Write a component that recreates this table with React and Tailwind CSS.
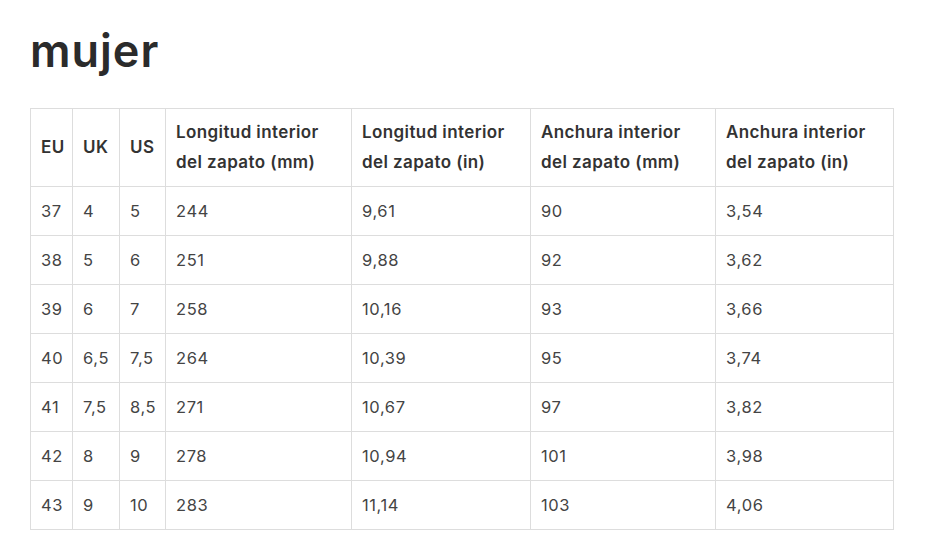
const headers = [
  ["EU"],
  ["UK"],
  ["US"],
  ["Longitud interior", "del zapato (mm)"],
  ["Longitud interior", "del zapato (in)"],
  ["Anchura interior", "del zapato (mm)"],
  ["Anchura interior", "del zapato (in)"],
];

const rows = [
  ["37", "4", "5", "244", "9,61", "90", "3,54"],
  ["38", "5", "6", "251", "9,88", "92", "3,62"],
  ["39", "6", "7", "258", "10,16", "93", "3,66"],
  ["40", "6,5", "7,5", "264", "10,39", "95", "3,74"],
  ["41", "7,5", "8,5", "271", "10,67", "97", "3,82"],
  ["42", "8", "9", "278", "10,94", "101", "3,98"],
  ["43", "9", "10", "283", "11,14", "103", "4,06"],
];

const widths = ["w-[42px]", "w-[47px]", "w-[46px]", "w-[186px]", "w-[179px]", "w-[185px]", "w-[178px]"];

export default function App() {
  return (
    <div className="min-h-[557px] bg-white px-[30px] pt-[24px] text-[#333] font-['Inter','Noto_Sans',sans-serif]">
      <h1 className="text-[45px] leading-[53px] font-semibold tracking-[1px] text-[#2b2b2b] mb-[31px]">mujer</h1>

      <table className="w-[864px] table-fixed border-collapse">
        <colgroup>
          {widths.map((w, i) => (
            <col key={i} className={w} />
          ))}
        </colgroup>
        <thead>
          <tr>
            {headers.map((h, i) => (
              <th
                key={i}
                className="border border-[#dddddd] px-[10px] py-[9px] text-left align-middle text-[17px] font-semibold leading-[29.5px] tracking-[0.4px] whitespace-nowrap text-[#333]"
              >
                {h[0]}
                {h[1] && (
                  <>
                    <br />
                    {h[1]}
                  </>
                )}
              </th>
            ))}
          </tr>
        </thead>
        <tbody>
          {rows.map((r) => (
            <tr key={r[0]}>
              {r.map((c, i) => (
                <td
                  key={i}
                  className="border border-[#dddddd] px-[10px] py-[9px] text-[16.5px] leading-[30px] font-normal tracking-[0.6px] text-[#444]"
                >
                  {c}
                </td>
              ))}
            </tr>
          ))}
        </tbody>
      </table>
    </div>
  );
}
